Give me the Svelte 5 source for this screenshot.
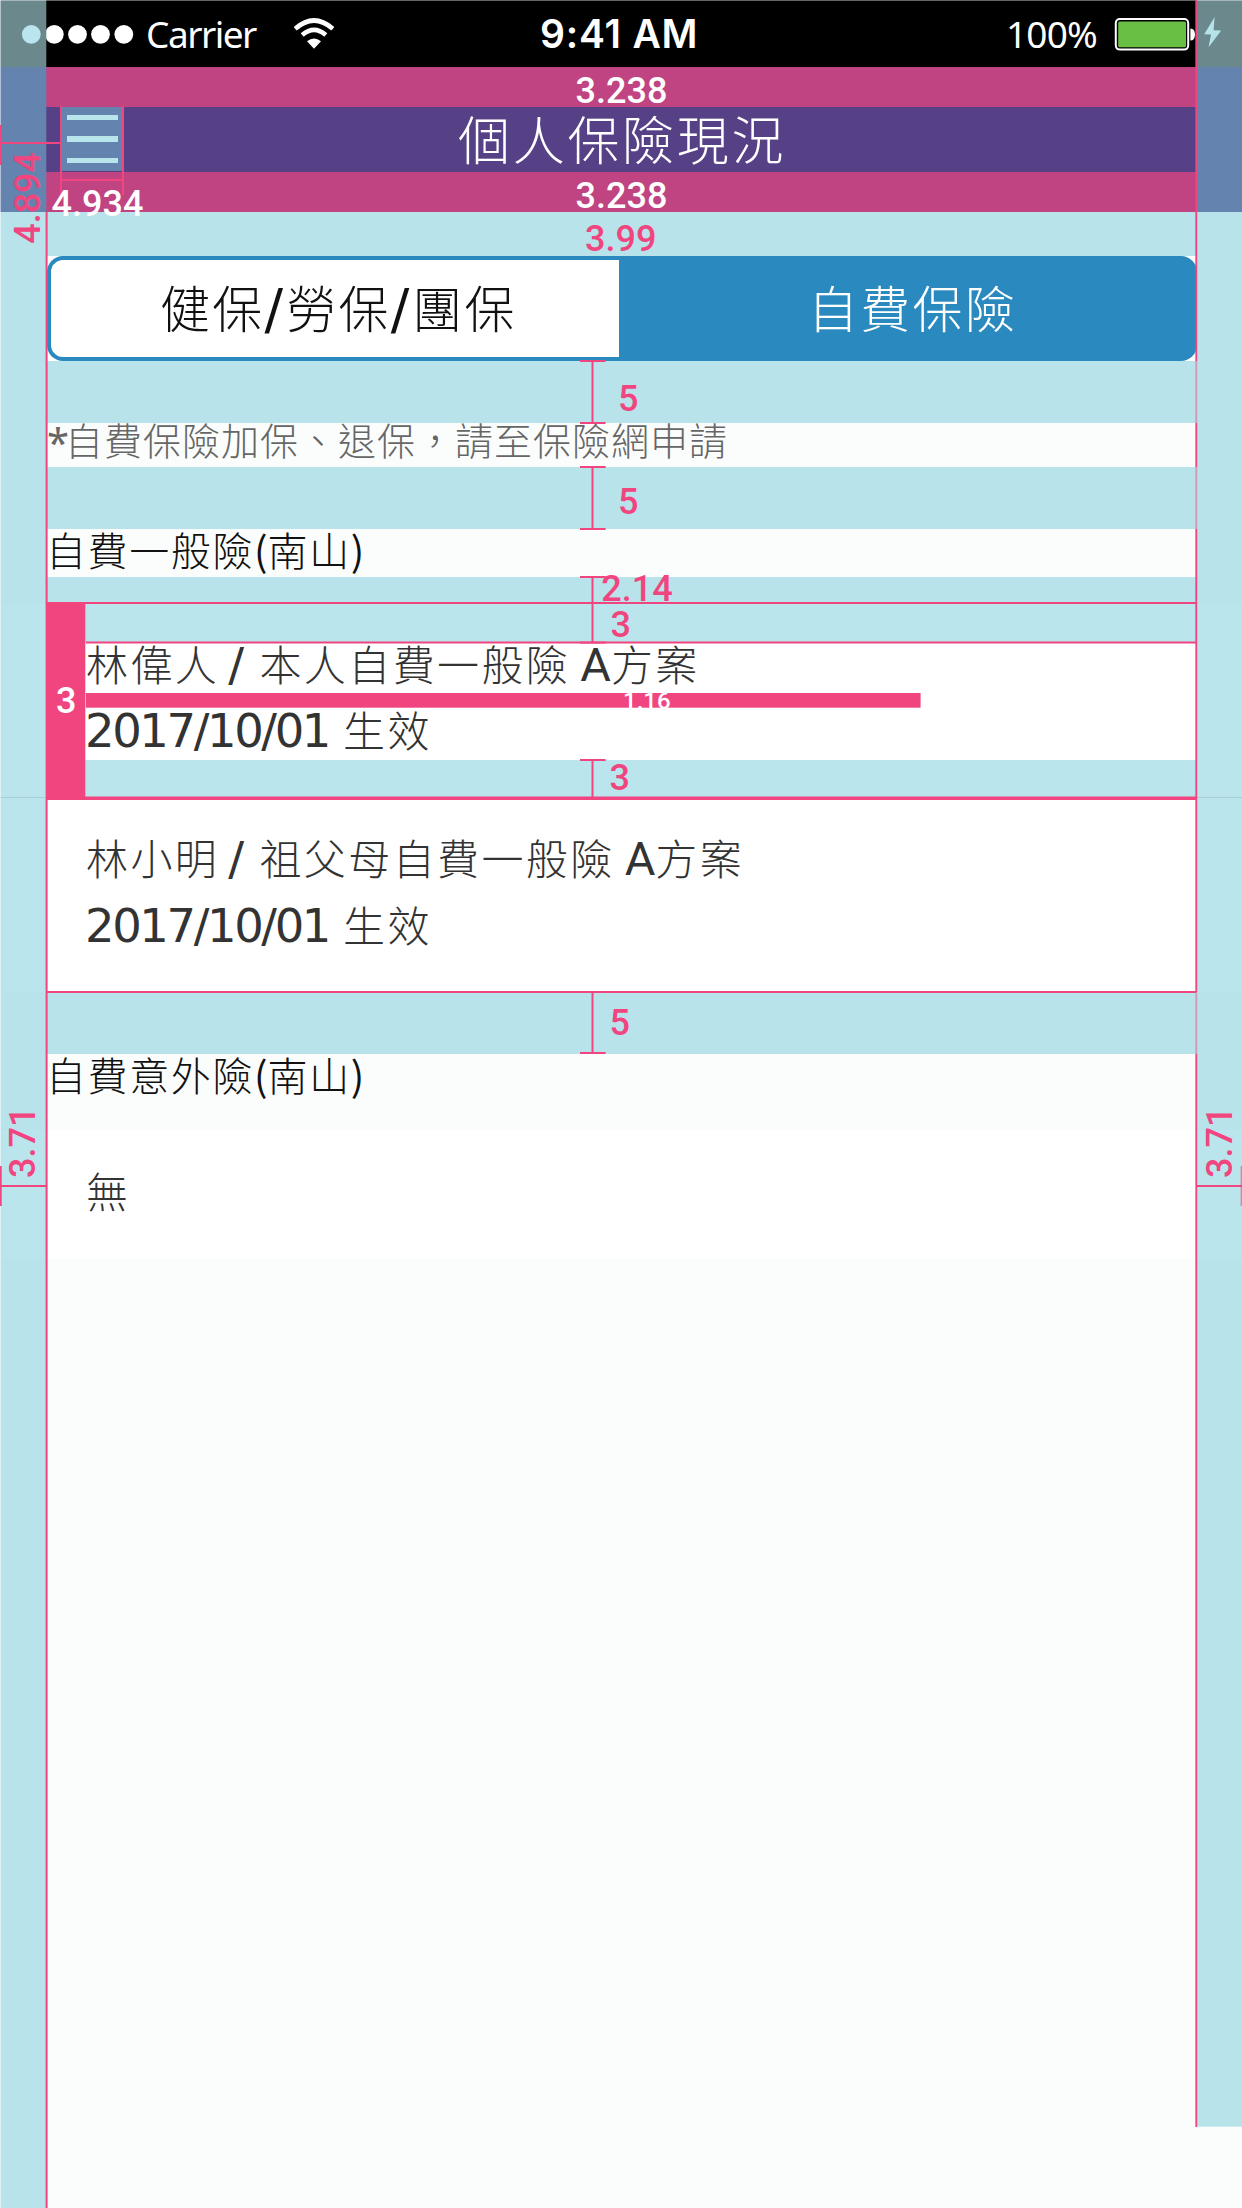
<script>
  const policies = [
    { name: '林偉人', plan: '本人自費一般險', date: '2017/10/01' },
    { name: '林小明', plan: '祖父母自費一般險', date: '2017/10/01' }
  ];

  const signal = [31.3, 54.3, 77.5, 100.5, 123.8];

  // Vertical measuring brackets: top, bottom, and which caps are drawn
  const brackets = [
    { top: 361, bottom: 423, caps: [361, 423] },
    { top: 467, bottom: 529, caps: [467, 529] },
    { top: 577, bottom: 642, caps: [577, 642.6] },
    { top: 760, bottom: 797, caps: [760] },
    { top: 992, bottom: 1053, caps: [1053] }
  ];

  const pinkLabels = [
    { x: 585, y: 250.6, text: '3.99' },
    { x: 618, y: 410.6, text: '5' },
    { x: 618, y: 514.4, text: '5' },
    { x: 601.3, y: 601.4, text: '2.14' },
    { x: 610.5, y: 637, text: '3' },
    { x: 609.5, y: 790.2, text: '3' },
    { x: 609.5, y: 1035, text: '5' }
  ];

  const whiteLabels = [
    { x: 575.5, y: 102.8, text: '3.238' },
    { x: 575.5, y: 207.8, text: '3.238' },
    { x: 51.5, y: 215.6, text: '4.934' },
    { x: 56, y: 712.7, text: '3' }
  ];

  const sideLabels = [
    { x: 40, y: 243.8, text: '4.894' },
    { x: 35.4, y: 1178, text: '3.71' },
    { x: 1232.3, y: 1178, text: '3.71' }
  ];

  // Stretches of the right guide that sit over white content
  const rightGuide = [[423, 467], [529, 992], [1054, 2127]];
</script>

<div class="screen">
  <header>
    <div class="status">
      <svg class="dots" viewBox="0 0 140 67">
        {#each signal as cx, i}
          <circle {cx} cy="34.3" r="9.4" fill={i ? '#fff' : '#bae5ee'} />
        {/each}
      </svg>
      <span class="carrier">Carrier</span>
      <svg class="wifi" viewBox="0 0 40 32">
        <path d="M1.2 9.6Q20-7 38.8 9.6" transform="translate(0 1.2)" />
        <path d="M8.2 17Q20 6.6 31.8 17" />
        <path class="tip" d="M13 23.2Q20 18 27 23.2L20 30.8Z" />
      </svg>
      <span class="time">9:41 AM</span>
      <span class="percent">100%</span>
      <svg class="battery" viewBox="0 0 82 36">
        <rect x="1.8" y="2" width="72.4" height="30.6" rx="4" fill="none" stroke="#fff" stroke-width="2" />
        <rect x="4.2" y="4.6" width="67.8" height="25.6" rx="1.5" fill="#69bf44" />
        <path d="M76.4 11.5Q81 11.5 81 17.5T76.4 23.5Z" fill="#fff" />
      </svg>
    </div>
    <div class="strip"></div>
    <div class="bar">
      <div class="menu"><i></i><i></i><i></i></div>
      <h1>個人保險現況</h1>
    </div>
    <div class="strip"></div>
  </header>

  <main>
    <div class="segment">
      <div class="tab">健保<b>/</b>勞保<b>/</b>團保</div>
      <div class="tab active">自費保險</div>
    </div>
    <p class="note"><span>*</span>自費保險加保、退保，請至保險網申請</p>
    <h2>自費一般險<em>(</em>南山<em>)</em></h2>
    <section>
      {#each policies as p, i}
        <article class:first={i === 0}>
          <p class="name">{p.name}<span class="slash">/</span>{p.plan}<span class="plan">A</span>方案</p>
          <p class="date"><span class="digits">{p.date}</span>生效</p>
        </article>
      {/each}
    </section>
    <h2 class="second">自費意外險<em>(</em>南山<em>)</em></h2>
    <div class="empty">無</div>
  </main>

  <svg class="guides" viewBox="0 0 1242 2208">
    <defs>
      <clipPath id="gap"><rect x="86" y="693" width="835" height="15" /></clipPath>
    </defs>

    <g class="side">
      <rect x="0" y="0" width="46.3" height="67" fill="#6b888d" />
      <rect x="0" y="67" width="46.3" height="145" fill="#6583af" />
      <rect x="0" y="212" width="46" height="1996" fill="#b8e3eb" />
      <rect x="1196.5" y="0" width="45.5" height="67" fill="#6b888d" />
      <rect x="1196.5" y="67" width="45.5" height="145" fill="#6583af" />
      <rect x="1196.5" y="212" width="45.5" height="1914.7" fill="#b8e3eb" />
      {#each [0, 1197] as x}
        <rect {x} y="604" width="45" height="388" fill="#bae5ed" />
        <rect {x} y="1130" width="45" height="129" fill="#bae5ed" />
        <rect {x} y="797" width="45" height="1" fill="#a5ced6" />
      {/each}
      <rect x="0" y="0" width="1" height="2208" fill="#fff" opacity=".5" />
      <rect x="0" y="0" width="1242" height="1" fill="#fff" opacity=".4" />
    </g>

    <circle cx="31.3" cy="34.3" r="9.4" fill="#bae5ee" />
    <path d="M1214.6 17 1204.2 34.3 1211 34.6 1208.6 47.2 1221.2 30.6 1213.6 30.2Z" fill="#b5e2e9" />

    <rect x="46" y="602" width="39.3" height="197" fill="#f0457f" />
    <rect x="85.8" y="693" width="834.8" height="14.7" fill="#f0457f" />

    <g class="line">
      <path d="M46.6 212V2208" />
      <path d="M46 603H1196M86 642.5H1196M46 992H1196" />
      <path d="M46 798.3H1196" class="thick" />
      <path d="M0 143H61M61 106V195M123 106V195M61 180H123" />
      <path d="M0 1186H46M1197 1186H1242" />
      <path d="M.7 125V165M.7 1166V1206" />
      <path d="M1241.6 1166V1206" opacity=".6" />
      <path d="M1196.3 0V2126.7" opacity=".45" />
      <path d="M1196.3 0V361" class="thin" />
      {#each rightGuide as [a, b]}
        <path d="M1196.3 {a}V{b}" class="thin" />
      {/each}
      {#each brackets as b}
        <path d="M592.5 {b.top}V{b.bottom}" />
        {#each b.caps as y}
          <path d="M580 {y}H605.6" />
        {/each}
      {/each}
    </g>

    <g class="label">
      {#each pinkLabels as l}<text x={l.x} y={l.y}>{l.text}</text>{/each}
      {#each sideLabels as l}
        <text transform="translate({l.x} {l.y}) rotate(-90)">{l.text}</text>
      {/each}
    </g>
    <g class="label white">
      {#each whiteLabels as l}<text x={l.x} y={l.y}>{l.text}</text>{/each}
      <text class="small" x="623" y="709" clip-path="url(#gap)">1.16</text>
    </g>
  </svg>
</div>

<style>
  :global(body) { background: #fbfdfc; }
  .screen {
    position: relative;
    width: 1242px;
    height: 2208px;
    overflow: hidden;
    background: #fbfdfc;
    font-family: "Noto Sans CJK TC", sans-serif;
    font-weight: 300;
  }
  h1, h2, p { margin: 0; font-weight: 300; white-space: nowrap; }

  .status {
    display: flex;
    height: 67px;
    background: #000;
    color: #fff;
    line-height: 67px;
    white-space: nowrap;
  }
  .status > * { box-sizing: border-box; flex: none; }
  .dots { width: 140px; height: 67px; }
  .carrier {
    width: 154px;
    padding-left: 6px;
    font: 400 37px/68px "Noto Sans", sans-serif;
    letter-spacing: -1.5px;
  }
  .wifi { width: 40px; height: 32px; margin-top: 18px; }
  .wifi path { fill: none; stroke: #fff; stroke-width: 4.6; }
  .wifi .tip { fill: #fff; stroke: none; }
  .time {
    width: 672px;
    padding-left: 206px;
    font: 600 39px/67px Inter, sans-serif;
    letter-spacing: 0.8px;
  }
  .percent {
    width: 108px;
    font: 400 37px/68px "Noto Sans", sans-serif;
    letter-spacing: -0.8px;
  }
  .battery { width: 82px; height: 36px; margin-top: 17px; }

  .strip { height: 40px; background: #c04481; }
  .bar {
    display: flex;
    height: 65px;
    background: #574186;
    color: #fff;
  }
  .menu {
    box-sizing: border-box;
    display: flex;
    flex-direction: column;
    gap: 16px;
    width: 61px;
    height: 64px;
    margin-left: 62px;
    padding: 8px 5px;
    background: #6583af;
  }
  .menu i { height: 6px; background: #b8e4ec; }
  h1 {
    margin-left: 335px;
    font-size: 52px;
    line-height: 61px;
    letter-spacing: 2.7px;
  }

  main {
    display: flex;
    flex-direction: column;
    padding: 44px 45px 0 47px;
    background: linear-gradient(#b8e3eb 0 0) 0 0 / 100% 392px no-repeat;
  }
  .segment {
    display: flex;
    height: 105px;
    background: #fff;
  }
  .tab {
    box-sizing: border-box;
    width: 572px;
    padding-left: 109px;
    border: 4px solid #2a89be;
    border-right: 0;
    border-radius: 16px 0 0 16px;
    background: #fff;
    color: #111;
    font-size: 50px;
    line-height: 93px;
    letter-spacing: 2.3px;
    white-space: nowrap;
  }
  .tab b {
    margin: 0 2px 0 0;
    font: 400 55px/0 "DejaVu Sans", sans-serif;
    letter-spacing: 1px;
  }
  .tab.active {
    width: 578px;
    padding-left: 185px;
    border-radius: 0 16px 16px 0;
    background: #2a89be;
    color: #fff;
  }
  .note {
    height: 44px;
    margin-top: 62px;
    background: #fbfdfc;
    color: #666;
    font-size: 38px;
    line-height: 32px;
    letter-spacing: 1px;
  }
  .note span {
    margin-right: -3px;
    font: 400 40px/0 "Noto Sans", sans-serif;
    letter-spacing: -1px;
    vertical-align: -2px;
  }
  h2 {
    height: 48px;
    margin-top: 62px;
    background: #fbfdfc;
    color: #111;
    font-size: 40px;
    line-height: 40px;
    letter-spacing: 1.6px;
    text-indent: -1px;
  }
  h2 em { font-style: normal; font-weight: 400; letter-spacing: 0; }
  section { margin-top: 25px; color: #333; }
  article {
    box-sizing: border-box;
    height: 194px;
    padding: 32px 0 0 39px;
    background: #fff;
    font-size: 42px;
    letter-spacing: 2.4px;
  }
  .name, .date { height: 66px; line-height: 50px; }
  .first {
    height: 196px;
    background: linear-gradient(#bae5ed 0 40px, #fff 40px 158px, #bae5ed 158px);
  }
  .first .name { padding-top: 4px; }
  article + article { height: 194px; padding-top: 34px; }
  article + article .date { padding-top: 1px; }
  .slash {
    margin: 0 13px 0 9px;
    font: 400 47px/0 "DejaVu Sans", sans-serif;
  }
  .plan {
    margin-left: 10px;
    font: 400 47px/0 Roboto, sans-serif;
    letter-spacing: 0;
  }
  .digits {
    margin-left: -1px;
    margin-right: 14px;
    font: 400 46.5px/0 "DejaVu Sans", sans-serif;
    letter-spacing: -2.4px;
  }
  .second {
    height: 76px;
    margin-top: 0;
    border-top: 62px solid #b8e3eb;
  }
  .empty {
    height: 129px;
    padding-left: 39px;
    background: #fff;
    color: #333;
    font-size: 42px;
    line-height: 119px;
  }

  .guides {
    position: absolute;
    inset: 0;
    width: 1242px;
    height: 2208px;
  }
  .line path { fill: none; stroke: #f0457f; stroke-width: 2; }
  .line .thick { stroke-width: 3.6; }
  .line .thin { stroke-width: 1.6; }
  .label { fill: #f0457f; font: 500 36px Roboto, sans-serif; }
  .white { fill: #fff; }
  .small { font-size: 24px; }
</style>
